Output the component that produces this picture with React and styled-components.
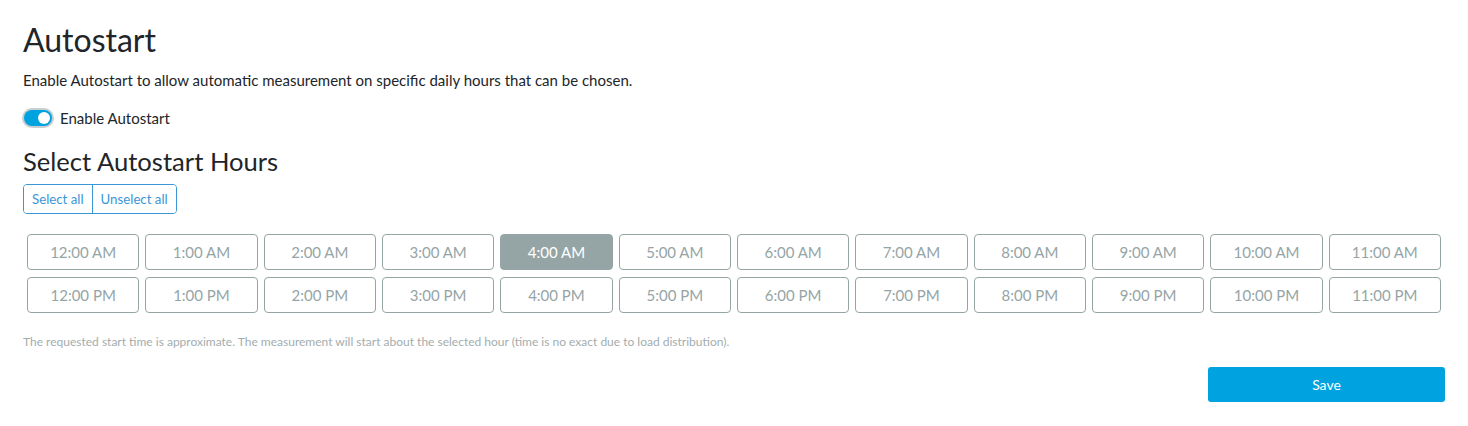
import React, { useState } from 'react';
import styled, { createGlobalStyle } from 'styled-components';

const GlobalStyle = createGlobalStyle`
  * { box-sizing: border-box; }
  body {
    margin: 0;
    background: #ffffff;
    font-family: Lato, "Open Sans", sans-serif;
    color: #212529;
  }
`;

const StyledPage = styled.div`
  padding: 20px 23px 0 23px;
`;

const StyledTitle = styled.h1`
  margin: 0;
  font-size: 32px;
  font-weight: 400;
  line-height: 40px;
  color: #212529;
`;

const StyledText = styled.p`
  margin: 10px 0 0 0;
  font-size: 15px;
  line-height: 20px;
`;

const StyledSwitchRow = styled.label`
  display: flex;
  align-items: center;
  gap: 8px;
  margin-top: 18px;
  font-size: 15px;
  line-height: 20px;
`;

const StyledSwitch = styled.span`
  position: relative;
  width: 28px;
  height: 16px;
  border-radius: 8px;
  background: ${props => (props.on ? '#00a3e0' : '#ffffff')};
  box-shadow: 0 0 0 2px #c9ced1;
  margin-left: 1px;
  &::after {
    content: '';
    position: absolute;
    top: 2px;
    left: ${props => (props.on ? '14px' : '2px')};
    width: 12px;
    height: 12px;
    border-radius: 50%;
    background: #ffffff;
  }
`;

const StyledSubtitle = styled.h2`
  margin: 18px 0 0 0;
  font-size: 25.6px;
  font-weight: 400;
  line-height: 30px;
`;

const StyledGroup = styled.div`
  display: inline-flex;
  margin-top: 8px;
  border: 1px solid #3a96d6;
  border-radius: 4px;
  height: 30px;
  overflow: hidden;
`;

const StyledGroupButton = styled.button`
  font-family: inherit;
  font-size: 13.25px;
  color: #3a96d6;
  background: #ffffff;
  border: none;
  padding: 0 8px;
  cursor: pointer;
  & + & {
    border-left: 1px solid #3a96d6;
  }
`;

const StyledGrid = styled.div`
  display: grid;
  grid-template-columns: repeat(12, 1fr);
  column-gap: 6px;
  row-gap: 7px;
  padding: 0 4px;
  margin-top: 20px;
`;

const StyledHour = styled.button`
  height: 36px;
  font-family: inherit;
  font-size: 15px;
  border-radius: 4px;
  border: 1px solid #95a5a6;
  background: ${props => (props.selected ? '#95a5a6' : '#ffffff')};
  color: ${props => (props.selected ? '#ffffff' : '#95a5a6')};
  cursor: pointer;
  padding: 0;
`;

const StyledNote = styled.p`
  margin: 22px 0 0 0;
  font-size: 12px;
  line-height: 14px;
  color: #a3adae;
`;

const StyledFooter = styled.div`
  display: flex;
  justify-content: flex-end;
  margin-top: 18px;
`;

const StyledSave = styled.button`
  width: 237px;
  height: 35px;
  border: none;
  border-radius: 3px;
  background: #00a3e0;
  color: #ffffff;
  font-family: inherit;
  font-size: 14px;
  cursor: pointer;
`;

const hours = [
  ...Array.from({ length: 12 }, (_, i) => `${i === 0 ? 12 : i}:00 AM`),
  ...Array.from({ length: 12 }, (_, i) => `${i === 0 ? 12 : i}:00 PM`),
];

const App = () => {
  const [enabled, setEnabled] = useState(true);
  const [selected, setSelected] = useState(['4:00 AM']);

  const toggleHour = hour =>
    setSelected(prev =>
      prev.includes(hour) ? prev.filter(h => h !== hour) : [...prev, hour]
    );

  return (
    <StyledPage>
      <GlobalStyle />
      <StyledTitle>Autostart</StyledTitle>
      <StyledText>
        Enable Autostart to allow automatic measurement on specific daily hours that can be chosen.
      </StyledText>
      <StyledSwitchRow onClick={() => setEnabled(!enabled)}>
        <StyledSwitch on={enabled ? 1 : 0} />
        Enable Autostart
      </StyledSwitchRow>
      <StyledSubtitle>Select Autostart Hours</StyledSubtitle>
      <StyledGroup>
        <StyledGroupButton onClick={() => setSelected(hours)}>Select all</StyledGroupButton>
        <StyledGroupButton onClick={() => setSelected([])}>Unselect all</StyledGroupButton>
      </StyledGroup>
      <StyledGrid>
        {hours.map(hour => (
          <StyledHour
            key={hour}
            selected={selected.includes(hour)}
            onClick={() => toggleHour(hour)}
          >
            {hour}
          </StyledHour>
        ))}
      </StyledGrid>
      <StyledNote>
        The requested start time is approximate. The measurement will start about the selected hour (time is no exact due to load distribution).
      </StyledNote>
      <StyledFooter>
        <StyledSave>Save</StyledSave>
      </StyledFooter>
    </StyledPage>
  );
};

export default App;
